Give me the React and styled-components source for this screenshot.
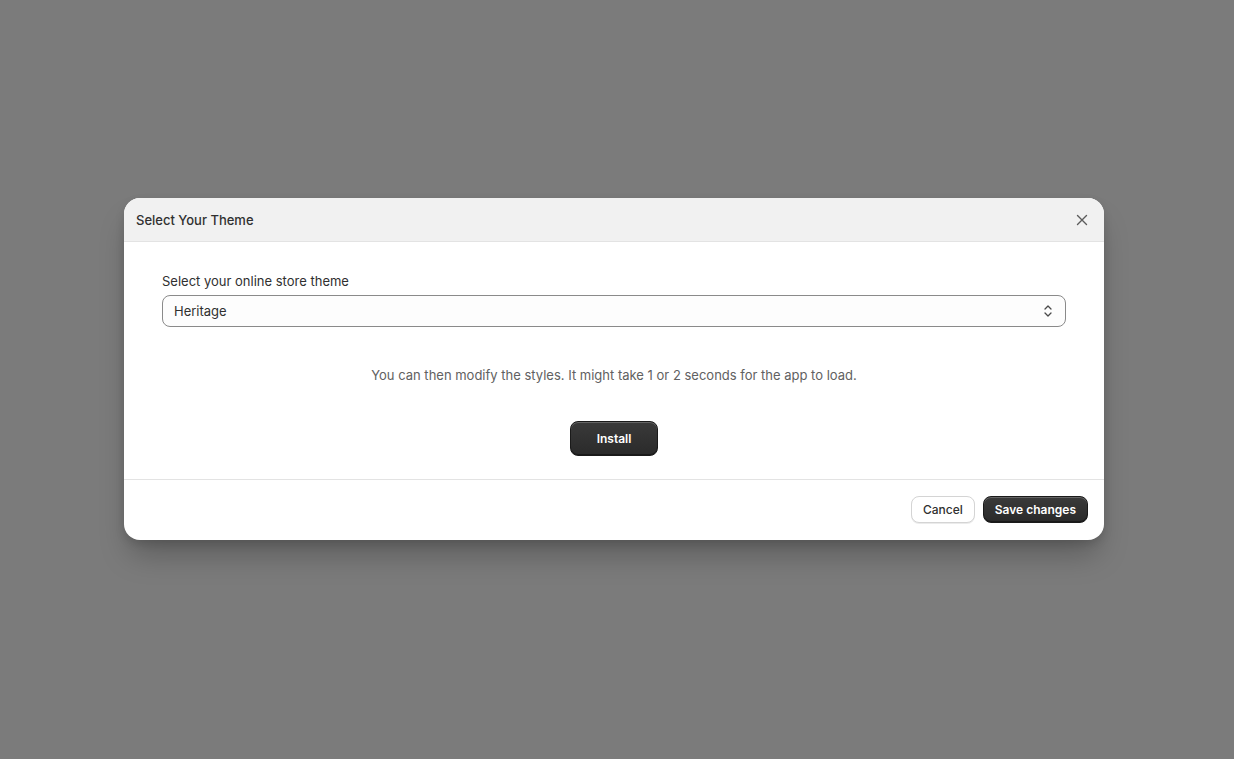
import React from 'react';
import styled, { createGlobalStyle } from 'styled-components';

const GlobalStyle = createGlobalStyle`
	html, body {
		margin: 0;
		padding: 0;
		height: 100%;
	}
	body {
		background: #7b7b7b;
		font-family: Inter, "Noto Sans", sans-serif;
		color: #303030;
		-webkit-font-smoothing: antialiased;
	}
`;

const Backdrop = styled.div`
	width: 1234px;
	height: 759px;
	display: flex;
	justify-content: flex-start;
	padding: 198px 0 0 124px;
	box-sizing: border-box;
`;

const Modal = styled.div`
	width: 980px;
	height: 342px;
	background: #fff;
	border-radius: 16px;
	overflow: hidden;
	display: flex;
	flex-direction: column;
	box-shadow: 0 20px 30px -6px rgba(0, 0, 0, 0.25), 0 4px 10px rgba(0, 0, 0, 0.12);
`;

const Header = styled.div`
	height: 44px;
	box-sizing: border-box;
	background: #f1f1f1;
	border-bottom: 1px solid #e3e3e3;
	display: flex;
	align-items: center;
	justify-content: space-between;
	padding: 0 8px 0 12px;
`;

const Title = styled.h2`
	margin: 0;
	font-size: 13px;
	font-weight: 550;
	color: #303030;
`;

const CloseButton = styled.button`
	width: 28px;
	height: 28px;
	border: none;
	background: transparent;
	display: flex;
	align-items: center;
	justify-content: center;
	padding: 0;
	cursor: pointer;
	color: #5c5c5c;
`;

const Body = styled.div`
	padding: 29px 38px 23px;
	border-bottom: 1px solid #e3e3e3;
	display: flex;
	flex-direction: column;
`;

const Label = styled.label`
	font-size: 13px;
	line-height: 20px;
	color: #303030;
	margin-bottom: 4px;
`;

const SelectBox = styled.div`
	height: 32px;
	box-sizing: border-box;
	border: 1px solid #8a8a8a;
	border-radius: 8px;
	display: flex;
	align-items: center;
	justify-content: space-between;
	padding: 0 12px 0 11px;
	font-size: 13px;
	color: #303030;
	background: #fdfdfd;
`;

const Hint = styled.p`
	margin: 38px 0 0;
	text-align: center;
	font-size: 13px;
	line-height: 20px;
	color: #616161;
`;

const Center = styled.div`
	display: flex;
	justify-content: center;
	margin-top: 36px;
`;

const Button = styled.button`
	font-family: Inter, "Noto Sans", sans-serif;
	font-size: 12px;
	font-weight: ${({ primary }) => (primary ? 600 : 500)};
	height: ${({ tall }) => (tall ? '35px' : '27px')};
	padding: 0 ${({ tall }) => (tall ? '26px' : '11px')};
	border-radius: 8px;
	cursor: pointer;
	color: ${({ primary }) => (primary ? '#fff' : '#303030')};
	background: ${({ primary }) => (primary ? 'linear-gradient(#3a3a3a, #2a2a2a)' : '#fff')};
	border: 1px solid ${({ primary }) => (primary ? '#1a1a1a' : '#d4d4d4')};
	box-shadow: ${({ primary }) =>
		primary
			? 'inset 0 1px 0 rgba(255,255,255,0.22), inset 0 -1px 0 rgba(0,0,0,0.4)'
			: '0 1px 0 rgba(0,0,0,0.08)'};
`;

const Footer = styled.div`
	flex: 1;
	display: flex;
	justify-content: flex-end;
	align-items: flex-start;
	gap: 8px;
	padding: 16px 16px 0;
`;

const App = () => {
	return (
		<>
			<GlobalStyle />
			<Backdrop>
				<Modal>
					<Header>
						<Title>Select Your Theme</Title>
						<CloseButton>
							<svg width="14" height="14" viewBox="0 0 14 14" fill="none">
								<path d="M2.5 2.5L11.5 11.5M11.5 2.5L2.5 11.5" stroke="currentColor" strokeWidth="1.4" strokeLinecap="round" />
							</svg>
						</CloseButton>
					</Header>
					<Body>
						<Label>Select your online store theme</Label>
						<SelectBox>
							<span>Heritage</span>
							<svg width="10" height="14" viewBox="0 0 10 14" fill="none">
								<path d="M2 5L5 2L8 5M2 9L5 12L8 9" stroke="#4a4a4a" strokeWidth="1.3" strokeLinecap="round" strokeLinejoin="round" />
							</svg>
						</SelectBox>
						<Hint>You can then modify the styles. It might take 1 or 2 seconds for the app to load.</Hint>
						<Center>
							<Button primary tall>Install</Button>
						</Center>
					</Body>
					<Footer>
						<Button>Cancel</Button>
						<Button primary>Save changes</Button>
					</Footer>
				</Modal>
			</Backdrop>
		</>
	);
};

export default App;
